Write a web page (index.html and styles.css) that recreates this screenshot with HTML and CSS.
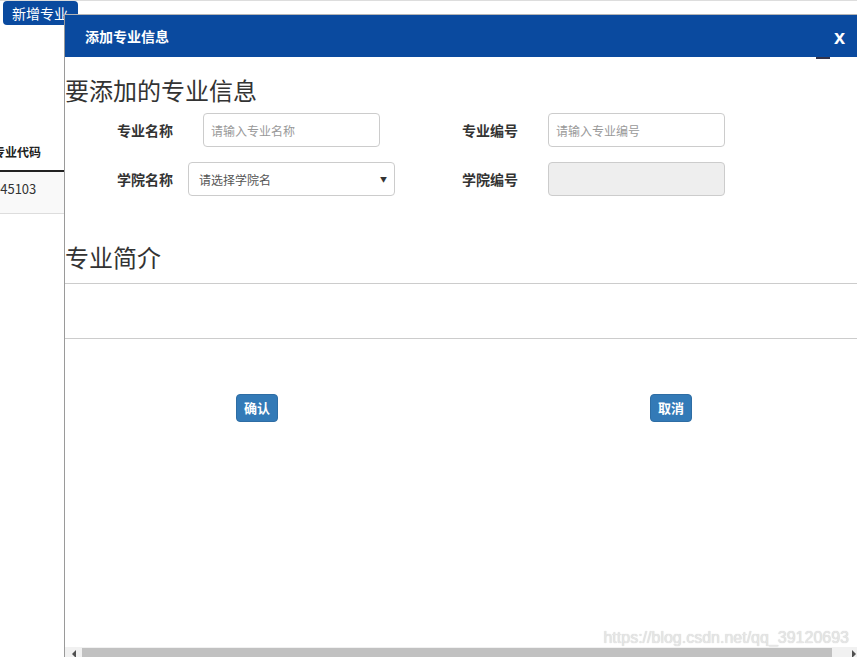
FILE: index.html
```html
<!DOCTYPE html>
<html lang="zh">
<head>
<meta charset="utf-8">
<title>添加专业信息</title>
<link rel="stylesheet" href="styles.css">
</head>
<body>
<div class="page">
  <div class="toolbar">
    <button class="btn-add" type="button">新增专业</button>
  </div>
  <table class="list">
    <thead>
      <tr><th>专业代码</th></tr>
    </thead>
    <tbody>
      <tr><td>045103</td></tr>
    </tbody>
  </table>
</div>

<div class="modal">
  <div class="modal-header">
    <span class="modal-title">添加专业信息</span>
    <span class="modal-close">x</span>
  </div>
  <div class="header-notch"></div>
  <div class="modal-body">
    <h2 class="section-title">要添加的专业信息</h2>
    <div class="form">
      <div class="form-row">
        <label class="label label-a">专业名称</label>
        <input class="field field-text" type="text" placeholder="请输入专业名称">
        <label class="label label-b">专业编号</label>
        <input class="field field-text" type="text" placeholder="请输入专业编号">
      </div>
      <div class="form-row">
        <label class="label label-a2">学院名称</label>
        <div class="field field-select"><span>请选择学院名</span><span class="caret">▼</span></div>
        <label class="label label-b2">学院编号</label>
        <div class="field field-text field-disabled"></div>
      </div>
    </div>
    <h2 class="section-title section-intro">专业简介</h2>
    <hr class="rule">
    <div class="intro-space"></div>
    <hr class="rule">
    <div class="actions">
      <button class="btn btn-ok" type="button">确认</button>
      <button class="btn btn-cancel" type="button">取消</button>
    </div>
  </div>
  <div class="hscroll">
    <div class="hs-arrow hs-left"></div>
    <div class="hs-thumb"></div>
    <div class="hs-arrow hs-right"></div>
  </div>
  <div class="watermark">https://blog.csdn.net/qq_39120693</div>
</div>
</body>
</html>
```

FILE: styles.css
```css
* { box-sizing: border-box; }
html, body {
  margin: 0;
  padding: 0;
  width: 857px;
  height: 657px;
  overflow: hidden;
  background: #fff;
  font-family: "Noto Sans CJK SC", "Noto Sans", sans-serif;
  color: #333;
}
.page {
  border-top: 1px solid #ddd;
  height: 657px;
  overflow: hidden;
}
.toolbar {
  display: flex;
  padding-left: 3px;
}
.btn-add {
  height: 24px;
  width: 75px;
  padding: 0 0 0 9px;
  text-align: left;
  border: none;
  border-radius: 4px;
  background: #0a4a9f;
  color: #fff;
  font-family: inherit;
  font-size: 14px;
  line-height: 24px;
}
.list {
  margin-top: 109px;
  margin-left: -7px;
  width: 900px;
  border-collapse: collapse;
  font-size: 13px;
}
.list th {
  text-align: left;
  font-weight: bold;
  font-size: 12px;
  color: #222;
  padding: 8px 0 8px 0;
  line-height: 20px;
  border-bottom: 2px solid #222;
}
.list td {
  text-align: left;
  padding: 8px 0 16px 0;
  line-height: 17px;
  background: #f9f9f9;
  border-bottom: 1px solid #ddd;
  font-size: 13px;
  color: #333;
}

/* modal */
.modal {
  position: absolute;
  left: 64px;
  top: 14px;
  right: 0;
  bottom: 0;
  background: #fff;
  border-left: 1px solid #9a9a9a;
  border-top: 1px solid #b5b5b5;
  display: flex;
  flex-direction: column;
}
.modal-header {
  height: 42px;
  flex: none;
  background: #0a4a9f;
  display: flex;
  align-items: center;
  justify-content: space-between;
  padding: 0 12px 0 20px;
}
.modal-title {
  color: #fff;
  font-size: 14px;
  font-weight: bold;
  line-height: 20px;
}
.modal-close {
  color: #fff;
  font-family: "Liberation Sans", "Noto Sans", sans-serif;
  font-size: 20px;
  font-weight: bold;
  line-height: 20px;
  padding-top: 2px;
}
.header-notch {
  position: absolute;
  left: 751px;
  top: 42px;
  width: 14px;
  height: 2px;
  background: #33334a;
}
.modal-body {
  flex: 1;
  overflow: hidden;
}
.section-title {
  margin: 20px 0 0 0;
  font-size: 24px;
  line-height: 26px;
  font-weight: normal;
  color: #333;
}
.form {
  margin-top: 10px;
  display: flex;
  flex-direction: column;
  gap: 15px;
}
.form-row {
  display: flex;
  align-items: center;
  height: 34px;
}
.label {
  font-size: 14px;
  font-weight: bold;
  color: #333;
  line-height: 20px;
}
.label-a { margin-left: 52px; width: 86px; }
.label-b { margin-left: 82px; width: 86px; }
.label-a2 { margin-left: 52px; width: 71px; }
.label-b2 { margin-left: 67px; width: 86px; }
.field {
  height: 34px;
  border: 1px solid #ccc;
  border-radius: 4px;
  background: #fff;
  font-family: inherit;
  font-size: 12px;
  color: #555;
}
.field-text {
  width: 177px;
  padding: 0 7px;
  outline: none;
}
.field-text::placeholder { color: #999; }
.field-disabled { background: #eee; }
.field-select {
  width: 207px;
  display: flex;
  align-items: center;
  justify-content: space-between;
  padding: 0 7px 0 10px;
}
.caret {
  font-size: 7px;
  color: #333;
  line-height: 10px;
}
.section-intro { margin-top: 48px; }
.rule {
  margin: 13px 0 0 0;
  border: none;
  border-top: 1px solid #ccc;
  height: 0;
}
.intro-space { height: 54px; }
.intro-space + .rule { margin-top: 0; }
.actions {
  margin-top: 55px;
  display: flex;
}
.btn {
  width: 42px;
  height: 28px;
  padding: 0;
  border: 1px solid #2e6da4;
  border-radius: 4px;
  background: #337ab7;
  color: #fff;
  font-family: inherit;
  font-size: 13px;
  font-weight: bold;
  line-height: 26px;
}
.btn-ok { margin-left: 171px; }
.btn-cancel { margin-left: 372px; }

.hscroll {
  flex: none;
  height: 10px;
  background: #f1f1f1;
  display: flex;
  align-items: stretch;
}
.hs-arrow {
  width: 17px;
  display: flex;
  align-items: center;
  justify-content: center;
}
.hs-left::before {
  content: "";
  border-top: 4px solid transparent;
  border-bottom: 4px solid transparent;
  border-right: 4px solid #505050;
  margin-top: 4px;
}
.hs-thumb {
  width: 750px;
  margin-top: 1px;
  background: #c1c1c1;
}
.hs-right {
  flex: 1;
  justify-content: flex-end;
  padding-right: 1px;
}
.hs-right::before {
  content: "";
  border-top: 4px solid transparent;
  border-bottom: 4px solid transparent;
  border-left: 4px solid #505050;
  margin-top: 4px;
}
.watermark {
  position: absolute;
  right: 8px;
  bottom: 10px;
  font-family: "Liberation Sans", Arial, sans-serif;
  font-size: 16px;
  line-height: 18px;
  color: #e6e6e6;
  text-shadow: 0 0 1px #c4c4c4;
}
```
